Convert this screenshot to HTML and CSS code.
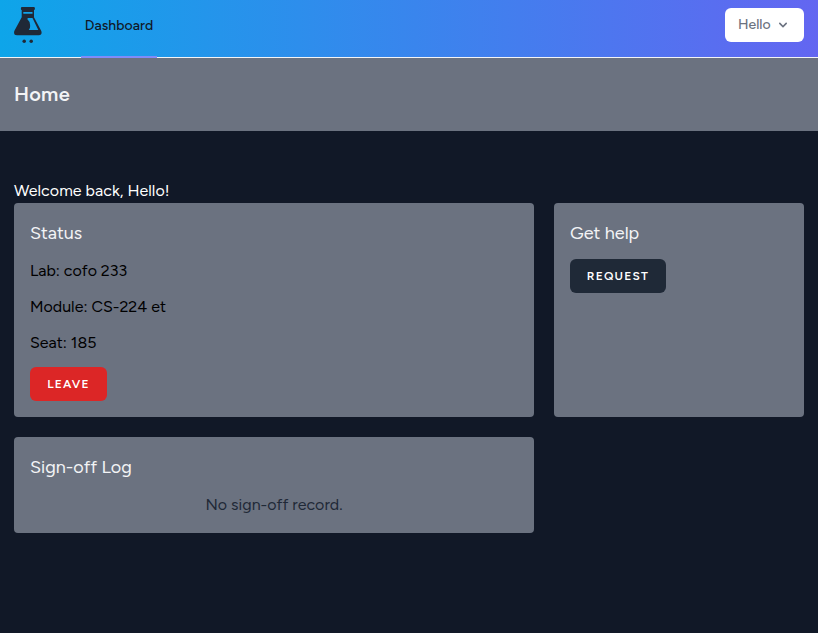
FILE: index.html
```html
<!DOCTYPE html>
<html lang="en">
<head>
<meta charset="utf-8">
<title>Home</title>
<link rel="stylesheet" href="styles.css">
</head>
<body>
<nav class="nav">
  <a class="logo" href="#" aria-label="Home">
    <svg width="28" height="38" viewBox="0 0 28 38">
      <path fill="#1f2937" fill-rule="evenodd" d="M8 1H19.800Q20.900 1 20.900 2.200V3Q20.900 4.100 20 4.100V11.300L27.300 25Q28.500 29.200 24.800 29.200H3Q-.8 29.200 .3 25L7.700 11.300V4.100Q6.900 4.100 6.900 3V2.200Q6.900 1 8 1ZM9.300 6V7.800H18.500V6ZM13.800 12Q13 13.500 14.200 14.200Q16 15.500 16 18.500Q16.600 22 14.800 24H24.300L18.500 12Z"/>
      <circle cx="10.200" cy="35.200" r="1.750" fill="#1f2937"/>
      <circle cx="17.200" cy="35.200" r="1.750" fill="#1f2937"/>
    </svg>
  </a>
  <a class="nav-link" href="#"><span>Dashboard</span></a>
  <button class="user-menu"><span>Hello</span>
    <svg width="16" height="16" viewBox="0 0 20 20"><path fill="currentColor" fill-rule="evenodd" d="M5.293 7.293a1 1 0 011.414 0L10 10.586l3.293-3.293a1 1 0 111.414 1.414l-4 4a1 1 0 01-1.414 0l-4-4a1 1 0 010-1.414z"/></svg>
  </button>
</nav>
<header class="page-header"><h1>Home</h1></header>
<main class="content">
  <p class="welcome">Welcome back, Hello!</p>
  <div class="grid">
    <section class="card">
      <h2>Status</h2>
      <p>Lab: cofo 233</p>
      <p>Module: CS-224 et</p>
      <p>Seat: 185</p>
      <button class="btn btn-danger">LEAVE</button>
    </section>
    <section class="card">
      <h2>Get help</h2>
      <button class="btn btn-dark">REQUEST</button>
    </section>
    <section class="card">
      <h2>Sign-off Log</h2>
      <p class="empty">No sign-off record.</p>
    </section>
  </div>
</main>
</body>
</html>
```
FILE: styles.css
```css
* { box-sizing: border-box; margin: 0; padding: 0; }
body { min-height: 100vh; background: #111827; color: #000; font: 16px/24px Figtree, Lato, sans-serif; }
a { color: inherit; text-decoration: none; }
button { font-family: inherit; border: 0; }
.nav { display: flex; height: 58px; padding: 0 14px; border-bottom: 1px solid #f3f4f6; background: linear-gradient(to right, #0ea5e9, #6366f1) border-box; }
.logo { display: block; height: 38px; margin-top: 6px; }
.logo svg { display: block; }
.nav-link { display: flex; align-items: flex-start; justify-content: center; width: 76px; height: 58px; margin-left: 39px; padding-top: 16px; border-bottom: 2px solid #818cf8; color: #111827; font-size: 14px; line-height: 20px; font-weight: 500; letter-spacing: .04px; }
.user-menu { display: flex; align-items: center; gap: 4px; width: 79px; height: 34px; margin: 8px 0 0 auto; padding: 0 13px; border-radius: 6px; background: #fff; color: #6b7280; font-size: 14px; line-height: 20px; font-weight: 500; }
.page-header { height: 73px; padding: 22px 14px; background: #6b7280; color: #f3f4f6; }
.page-header h1 { font-size: 20px; line-height: 28px; font-weight: 600; letter-spacing: .25px; }
.content { padding: 48px 14px; }
.welcome { color: #fff; letter-spacing: .05px; }
.grid { display: grid; grid-template-columns: 520px 250px; gap: 20px; }
.card { padding: 16px; border-radius: 4px; background: #6b7280; }
.card h2 { margin-bottom: 12px; color: #f3f4f6; font-size: 18px; line-height: 28px; font-weight: 400; }
.card p { margin-bottom: 12px; }
.card .empty { margin-bottom: 0; color: #1f2937; text-align: center; }
.btn { display: block; height: 34px; border-radius: 6px; color: #fff; font-size: 12px; line-height: 16px; font-weight: 600; letter-spacing: 1.2px; }
.btn-danger { width: 77px; background: #dc2626; }
.btn-dark { width: 96px; background: #1f2937; }
```
